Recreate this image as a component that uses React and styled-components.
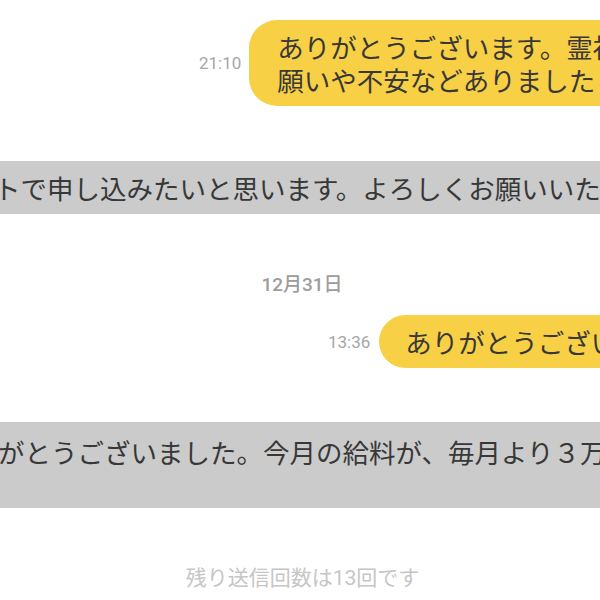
import styled, { createGlobalStyle } from 'styled-components';

const GlobalStyle = createGlobalStyle`
  html, body {
    margin: 0;
    padding: 0;
    background: #ffffff;
  }
`;

const Page = styled.div`
  width: 600px;
  height: 600px;
  overflow: hidden;
  background: #ffffff;
  display: flex;
  flex-direction: column;
  padding-top: 20px;
  box-sizing: border-box;
  font-family: "Noto Sans CJK JP", "Noto Sans", sans-serif;
  color: #383838;
`;

const SentRow = styled.div`
  display: flex;
  align-items: center;
  gap: ${p => p.gap}px;
  padding-left: ${p => p.indent}px;
  margin-bottom: ${p => p.after}px;
  white-space: nowrap;
`;

const Time = styled.span`
  font-family: Roboto, "Noto Sans", sans-serif;
  font-size: 17px;
  color: #a6a6a6;
  flex-shrink: 0;
`;

const YellowBubble = styled.div`
  flex-shrink: 0;
  background: #f8d045;
  border-radius: ${p => p.radius}px 0 0 ${p => p.radius}px;
  padding: 10px 40px 10px ${p => p.inset}px;
  font-size: 26.5px;
  line-height: 33px;
`;

const ReceivedRow = styled.div`
  display: flex;
  margin-bottom: ${p => p.after}px;
  white-space: nowrap;
`;

const GrayBubble = styled.div`
  flex-shrink: 0;
  margin-left: -${p => p.shift}px;
  background: #cbcbcb;
  padding: ${p => p.top}px 40px ${p => 20 - p.top}px 26px;
  font-size: 26.5px;
  line-height: 33px;
`;

const DateLabel = styled.div`
  text-align: center;
  padding-left: 4px;
  font-family: Roboto, "Noto Sans CJK JP", sans-serif;
  font-size: 19px;
  font-weight: 500;
  line-height: 22px;
  color: #9c9c9c;
  margin-bottom: 19px;
`;

const Footer = styled.div`
  text-align: center;
  padding-left: 5px;
  font-family: Roboto, "Noto Sans CJK JP", sans-serif;
  font-size: 21px;
  line-height: 24px;
  color: #c6c6c6;
`;

export default function App() {
  return (
    <>
      <GlobalStyle />
      <Page>
        <SentRow indent={199} gap={8} after={55}>
          <Time>21:10</Time>
          <YellowBubble radius={28} inset={28}>
            ありがとうございます。霊視鑑定でのお<br />
            願いや不安などありましたらお気軽にどうぞ
          </YellowBubble>
        </SentRow>

        <ReceivedRow after={60}>
          <GrayBubble shift={32} top={10}>
            トで申し込みたいと思います。よろしくお願いいたします。
          </GrayBubble>
        </ReceivedRow>

        <DateLabel>12月31日</DateLabel>

        <SentRow indent={328} gap={9} after={54}>
          <Time>13:36</Time>
          <YellowBubble radius={27} inset={26}>ありがとうございます。</YellowBubble>
        </SentRow>

        <ReceivedRow after={58}>
          <GrayBubble shift={28} top={13}>
            がとうございました。今月の給料が、毎月より３万円も多く<br />
            &nbsp;
          </GrayBubble>
        </ReceivedRow>

        <Footer>残り送信回数は13回です</Footer>
      </Page>
    </>
  );
}
